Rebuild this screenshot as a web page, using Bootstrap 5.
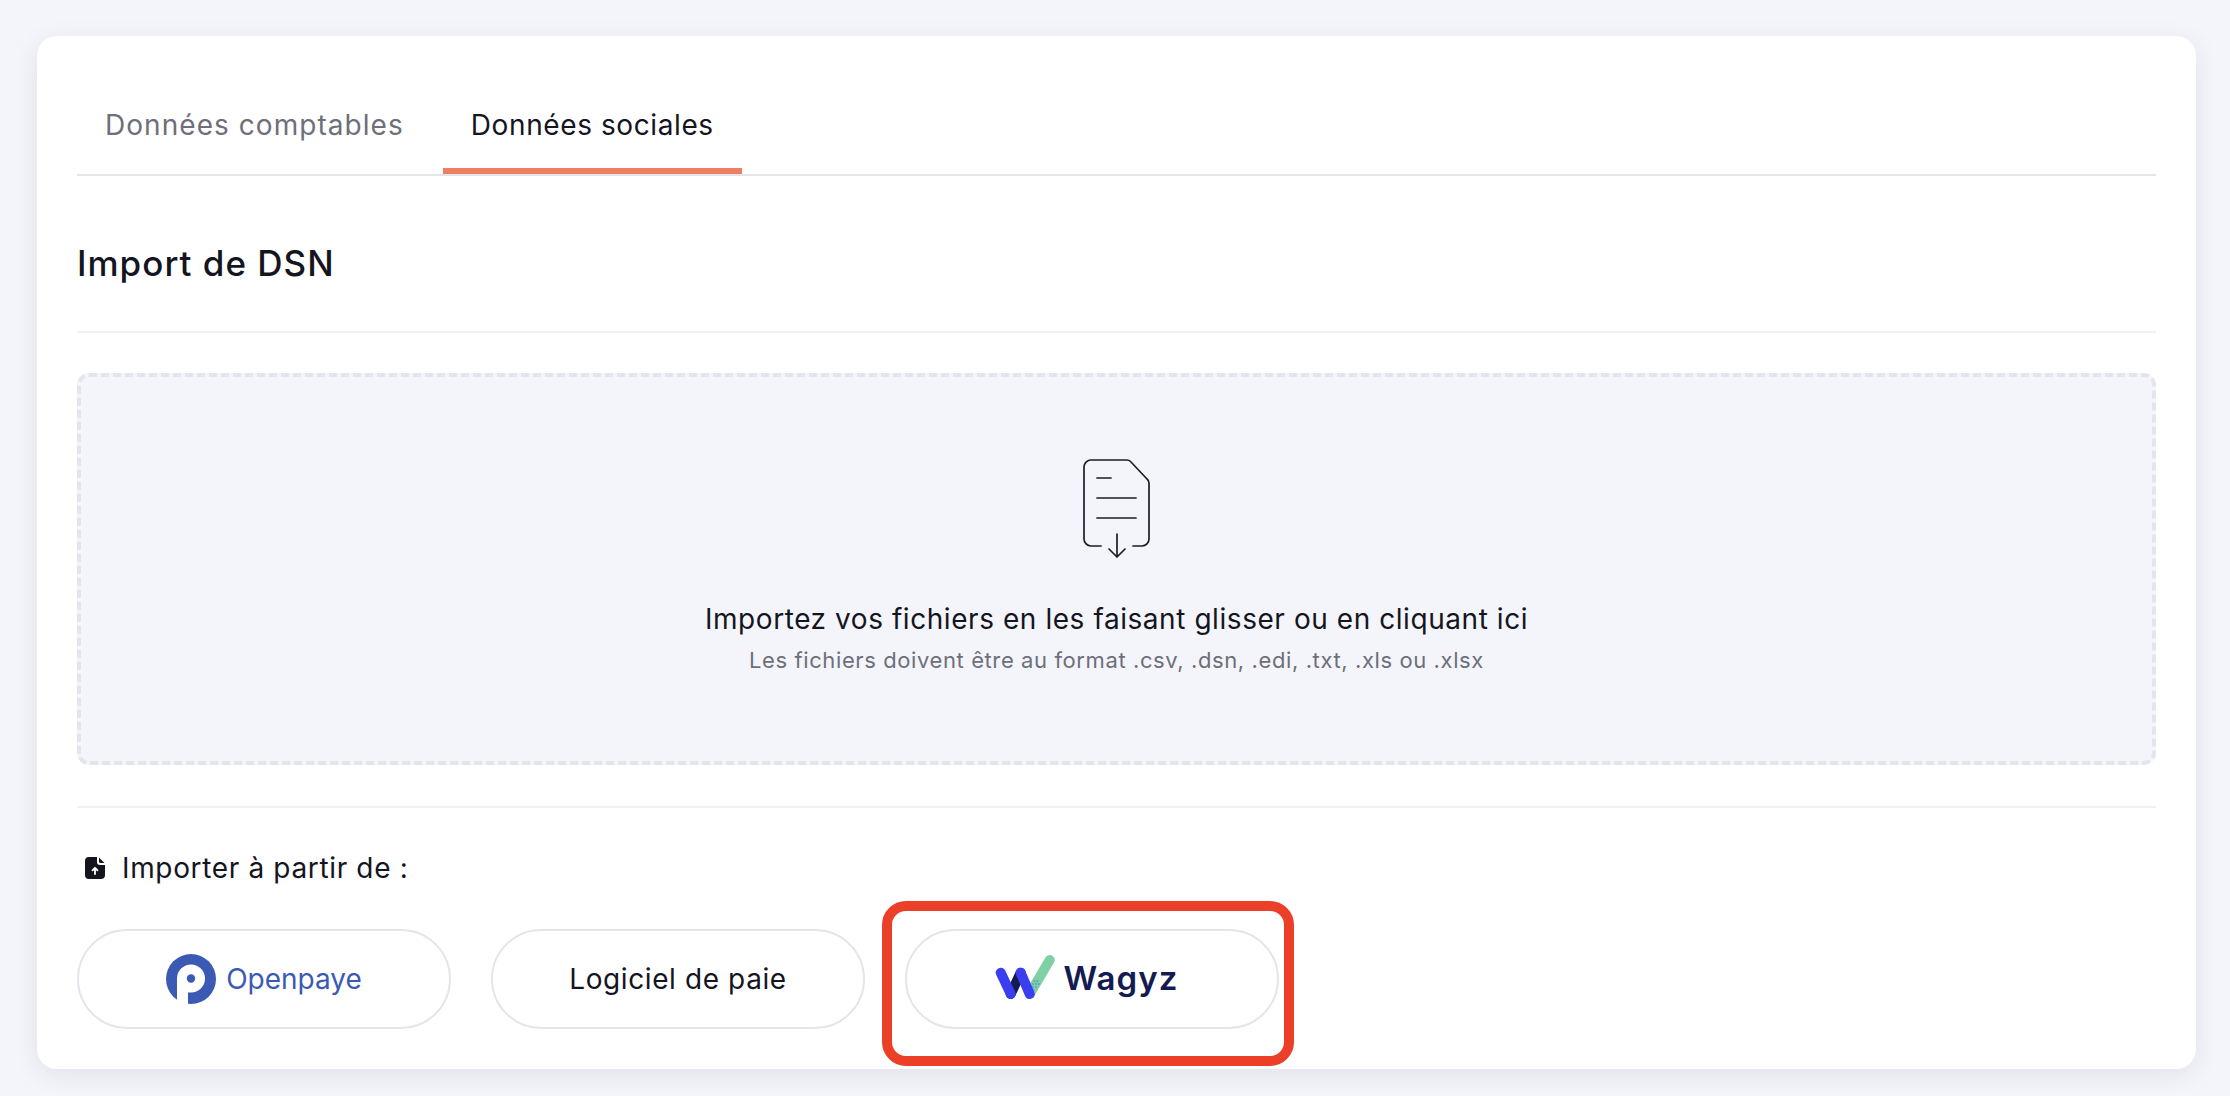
<!DOCTYPE html>
<html lang="fr">
<head>
  <meta charset="UTF-8">
  <title>Import de DSN</title>
  <meta name="viewport" content="width=device-width, initial-scale=1">
  <link href="https://cdn.jsdelivr.net/npm/bootstrap@5.3.3/dist/css/bootstrap.min.css" rel="stylesheet">
  <script src="https://cdn.jsdelivr.net/npm/bootstrap@5.3.3/dist/js/bootstrap.bundle.min.js"></script>

  <style>
    body {
      background: #f4f5fa;
      font-family: Inter, "Liberation Sans", sans-serif;
      color: #14151f;
      height: 1096px;
      overflow: hidden;
    }

    .panel {
      margin: 36px 34px 0 37px;
      height: 1033px;
      padding: 40px 40px 0;
      border-radius: 20px;
      box-shadow: 0 6px 26px rgba(40, 45, 90, .09);
    }

    /* tabs */
    .tabs-line { border-bottom: 2px solid #e4e4eb; gap: 11px; }
    .tab-item {
      height: 98px;
      padding: 6px 28px 0;
      display: flex;
      align-items: center;
      font-size: 28px;
      letter-spacing: 1.05px;
      color: #6d6f7b;
      border-bottom: 6px solid transparent;
    }
    .tab-item:hover { color: #6d6f7b; }
    .tab-item.active { color: #14151f; border-bottom-color: #ef7f63; letter-spacing: .6px; }

    .page-title {
      font-size: 35px;
      font-weight: 500;
      letter-spacing: 1px;
      line-height: 46px;
      margin: 64px 0 45px;
    }

    .rule { height: 2px; background: #f0f0f5; }

    /* drop zone */
    .dropzone {
      height: 392px;
      margin: 40px 0 41px;
      padding-top: 81px;
      background: #f4f5fa;
      border: 4px dashed #e3e5ec;
      border-radius: 12px;
    }
    .drop-title { font-size: 28px; letter-spacing: .56px; line-height: 40px; margin: 41px 0 5px; }
    .drop-sub { font-size: 22px; letter-spacing: .6px; line-height: 32px; color: #6d6f7b; }

    .from-label { font-size: 28px; letter-spacing: .65px; line-height: 40px; margin: 40px 0 41px; gap: 17px; padding-left: 8px; }

    /* source buttons */
    .sources { gap: 40px; }
    .source-btn {
      width: 374px;
      height: 100px;
      border: 2px solid #e4e4eb;
      background: #fff;
      color: #14151f;
      font-size: 28px;
      letter-spacing: .6px;
    }
    .source-btn:hover { border-color: #e4e4eb; background: #fff; color: #14151f; }

    .logo-gap { gap: 10px; }
    .logo-shift { padding-right: 10px !important; }
    .openpaye-name { font-size: 28px; letter-spacing: 0; font-weight: 400; color: #3a5ab4; }
    .wagyz-name { font-size: 33px; font-weight: 600; color: #141b52; letter-spacing: 1.1px; }

    .callout {
      position: absolute;
      left: -23px;
      top: -28px;
      width: 412px;
      height: 165px;
      border: 10px solid #eb4027;
      border-radius: 24px;
      pointer-events: none;
    }
  </style>
</head>

<body>

  <div class="card border-0 panel">

    <nav class="nav tabs-line">
      <a class="tab-item text-decoration-none" href="#">Données comptables</a>
      <a class="tab-item text-decoration-none active" href="#">Données sociales</a>
    </nav>

    <h1 class="page-title">Import de DSN</h1>
    <div class="rule"></div>

    <div class="dropzone text-center">
      <svg width="70" height="100" viewBox="0 0 70 100" fill="none" stroke="#1c1d28" stroke-width="1.7" stroke-linecap="round" stroke-linejoin="round" class="d-block mx-auto">
        <path d="M19 88H9a7 7 0 0 1-7-7V9a7 7 0 0 1 7-7h36a5 5 0 0 1 3.500 1.500L65 21a5 5 0 0 1 2 4V81a7 7 0 0 1-7 7H51"/>
        <path d="M15 20H29M15 40H54M15 60H54"/>
        <path d="M35 76V99M27 91l8 8 8-8"/>
      </svg>
      <div class="drop-title">Importez vos fichiers en les faisant glisser ou en cliquant ici</div>
      <div class="drop-sub">Les fichiers doivent être au format .csv, .dsn, .edi, .txt, .xls ou .xlsx</div>
    </div>

    <div class="rule"></div>

    <div class="d-flex align-items-center from-label">
      <svg width="20" height="22" viewBox="0 0 20 22">
        <path fill="#14151f" d="M4 0H12V5a3 3 0 0 0 3 3H20V18a4 4 0 0 1-4 4H4a4 4 0 0 1-4-4V4a4 4 0 0 1 4-4Z"/>
        <path fill="#14151f" d="M14 0.500 19.500 6H15.500a1.500 1.500 0 0 1-1.500-1.500Z"/>
        <path fill="none" stroke="#fff" stroke-width="1.800" stroke-linecap="round" stroke-linejoin="round" d="M10 17V11M7.500 13.300 10 10.800l2.500 2.500"/>
      </svg>
      <span>Importer à partir de :</span>
    </div>

    <div class="d-flex sources">
      <button class="btn rounded-pill source-btn d-flex align-items-center justify-content-center logo-gap p-0">
        <svg width="50" height="50" viewBox="0 0 50 50">
          <circle cx="25" cy="25" r="25" fill="#3a5ab4"/>
          <path fill="#fff" d="M11 50V24a14 14 0 1 1 14 14.500H22V50Z"/>
          <circle cx="25" cy="24.500" r="4.200" fill="#3a5ab4"/>
        </svg>
        <span class="openpaye-name">Openpaye</span>
      </button>

      <button class="btn rounded-pill source-btn p-0">Logiciel de paie</button>

      <div class="position-relative">
        <button class="btn rounded-pill source-btn d-flex align-items-center justify-content-center gap-2 p-0 logo-shift">
          <svg width="60" height="50" viewBox="16 14 60 50" fill="none" stroke-linecap="round">
            <path d="M31.700 54 41.700 32.700" stroke="#141b52" stroke-width="10"/>
            <path d="M50.700 54 70.700 20" stroke="#7fd0a4" stroke-width="10"/>
            <path d="M21.700 32.700 31.700 54M41.700 32.700 50.700 54" stroke="#3a3df0" stroke-width="10"/>
            <g fill="#4d7fd8">
              <circle cx="54" cy="44" r=".8"/><circle cx="57" cy="44" r=".8"/><circle cx="60" cy="44" r=".8"/>
              <circle cx="54" cy="47" r=".8"/><circle cx="57" cy="47" r=".8"/><circle cx="55.500" cy="41" r=".8"/>
              <circle cx="58.500" cy="41" r=".8"/><circle cx="55" cy="50" r=".8"/>
            </g>
          </svg>
          <span class="wagyz-name">Wagyz</span>
        </button>
        <div class="callout"></div>
      </div>
    </div>

  </div>

</body>
</html>
